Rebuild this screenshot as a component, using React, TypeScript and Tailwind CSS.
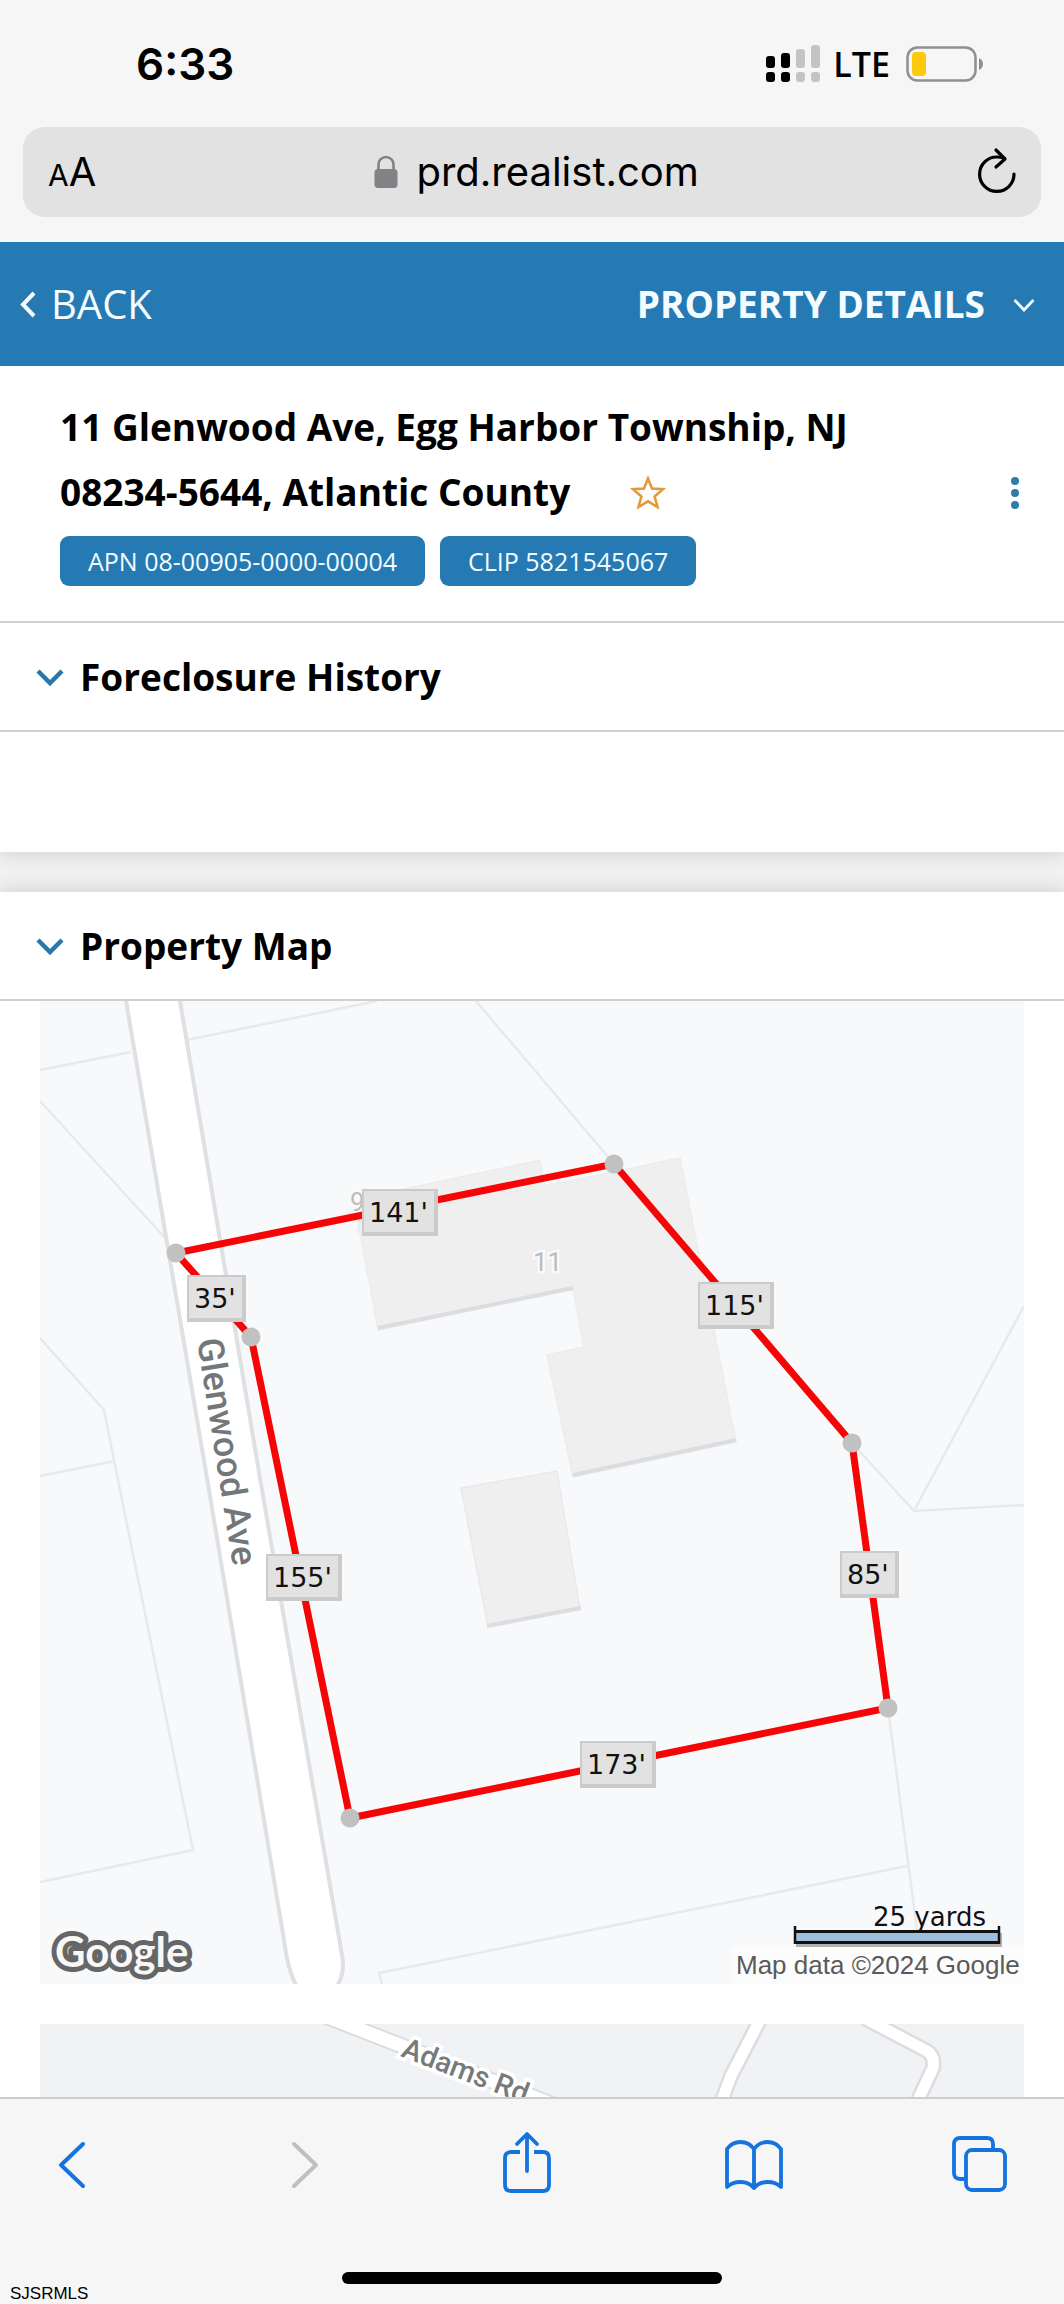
import React from "react";

const parcelLines = [
  "M40 1070L131 1052",
  "M187 1040L377 1001",
  "M476 1001L532 1067L614 1164",
  "M40 1101L166 1239",
  "M40 1338L104 1410L120 1490L193 1850L40 1882",
  "M40 1476L115 1461",
  "M1024 1306L914 1511L1024 1505",
  "M852 1443L914 1511",
  "M888 1708L924 1984",
  "M907 1866L379 1973L382 1984",
];

const corners = [
  [176, 1253],
  [251, 1337],
  [350, 1818],
  [888, 1708],
  [852, 1443],
  [614, 1164],
];

const sides = [
  { text: "141'", x: 362, y: 1189, w: 76 },
  { text: "35'", x: 187, y: 1275, w: 59 },
  { text: "115'", x: 698, y: 1282, w: 76 },
  { text: "155'", x: 266, y: 1554, w: 76 },
  { text: "85'", x: 840, y: 1551, w: 59 },
  { text: "173'", x: 580, y: 1741, w: 76 },
];

function StatusBar() {
  const tops = [11, 8, 4, 0];
  return (
    <div className="flex items-start justify-between pt-9 pr-20 pl-[136px] text-black">
      <time className="font-['Inter',sans-serif] text-[44px] leading-[56px] font-semibold">6:33</time>
      <div className="flex items-center pt-1">
        <svg className="h-[38px] w-[56px]" viewBox="0 0 56 38" role="img" aria-label="Signal strength">
          {tops.map((top, i) => (
            <g key={top} fill={i < 2 ? "#000" : "#c4c4c4"}>
              <rect x={i * 15 + 1} y={top} width="9" height={23 - top} rx="3" />
              <rect x={i * 15 + 1} y="27" width="9" height="10" rx="3" />
            </g>
          ))}
        </svg>
        <span className="ml-3 font-['Open_Sans',sans-serif] text-[34px] leading-[48px] font-semibold">LTE</span>
        <svg className="ml-4 h-[38px] w-[78px]" viewBox="0 0 78 38" role="img" aria-label="Battery low">
          <rect x="1.5" y="2.5" width="68" height="33" rx="10" fill="none" stroke="#8f8f8f" strokeWidth="2.5" />
          <rect x="6" y="7" width="14" height="24" rx="4" fill="#fcca0a" />
          <path d="M73 13Q77 15 77 19T73 25Z" fill="#8f8f8f" />
        </svg>
      </div>
    </div>
  );
}

function AddressBar() {
  return (
    <div className="mx-[23px] mt-[35px] mb-[25px] flex h-[90px] items-center justify-between rounded-[22px] bg-[#e2e2e2] pr-6 pl-[25px] font-['Inter',sans-serif] text-black">
      <button className="flex items-baseline leading-none" aria-label="Page settings">
        <span className="text-[30px]">A</span>
        <span className="text-[40px]">A</span>
      </button>
      <button className="flex items-center gap-[18px]">
        <svg className="h-[34px] w-6" viewBox="0 0 24 34" aria-hidden="true">
          <path d="M4.500 16V9.500a7.500 7.500 0 0 1 15 0V16" fill="none" stroke="#828286" strokeWidth="2.600" />
          <rect x="0.500" y="14" width="23" height="19" rx="3.500" fill="#828286" />
        </svg>
        <span className="text-[40px] leading-[50px]">prd.realist.com</span>
      </button>
      <button aria-label="Reload">
        <svg className="h-[50px] w-10" viewBox="0 0 40 50" fill="none" stroke="#000" strokeWidth="3.200" strokeLinecap="round" strokeLinejoin="round">
          <path d="M19 3L28 12L19 20" />
          <path d="M27 11.200Q23.500 10 20 10A17.200 17.200 0 1 0 37 27" />
        </svg>
      </button>
    </div>
  );
}

function SectionTitle({ children }: { children: string }) {
  return (
    <h2 className="border-b-2 border-[#d0d0d0] text-[37px] leading-[49px] font-bold text-black">
      <button className="flex w-full items-center gap-4 py-[29px] pl-9">
        <svg className="h-5 w-7" viewBox="0 0 28 20" fill="none" stroke="#2878ab" strokeWidth="4.500" aria-hidden="true">
          <path d="M2 4L14 16L26 4" />
        </svg>
        {children}
      </button>
    </h2>
  );
}

function ParcelMap() {
  return (
    <svg className="block w-full" viewBox="40 1001 984 983" role="img" aria-label="Parcel boundary map">
      <rect x="40" y="1001" width="984" height="983" fill="#f8f9fb" />
      <g fill="none" stroke="#e8e9ea" strokeWidth="2.500">
        {parcelLines.map((d) => (
          <path key={d} d={d} />
        ))}
      </g>
      <path
        d="M125 995L209 1490L284 1940Q288 1974 299 1990H334Q346 1976 342 1955L262 1490L179 995Z"
        fill="#fff"
        stroke="#dfe0e3"
        strokeWidth="4"
      />
      <path d="M361 1198L540 1160L546 1190L358 1232Z" fill="#efefef" stroke="#eaeaeb" />
      <path
        d="M358 1222L614 1172L680 1158L736 1442L573 1477L547 1355L584 1347L573 1289L378 1330Z"
        fill="#efefef"
        stroke="#ececed"
        strokeWidth="1.500"
      />
      <path d="M461 1488L557 1471L580 1609L488 1627Z" fill="#efefef" stroke="#e9e9ea" strokeWidth="1.500" />
      <g stroke="#dcdde0" strokeWidth="4">
        <path d="M378 1328L573 1288" />
        <path d="M573 1475L736 1440" />
        <path d="M487 1626L581 1608" />
      </g>
      <g fontFamily="Roboto, sans-serif" fontSize="26" fill="#bdbdbd" stroke="#fafafa" strokeWidth="5" paintOrder="stroke">
        <text x="533" y="1271">11</text>
        <text x="350" y="1211">9</text>
      </g>
      <text
        x="0"
        y="0"
        transform="translate(197 1340) rotate(81)"
        fontFamily="Roboto, sans-serif"
        fontSize="36"
        fontWeight="500"
        fill="#74777a"
      >
        Glenwood Ave
      </text>
      <polygon points={corners.map((p) => p.join(",")).join(" ")} fill="none" stroke="#f50505" strokeWidth="7" />
      {corners.map(([x, y]) => (
        <circle key={x} cx={x} cy={y} r="9.500" fill="#c1c1c1" />
      ))}
      {sides.map((s) => (
        <g key={s.text}>
          <rect x={s.x} y={s.y} width={s.w} height="47" fill="#cbcbcb" />
          <rect x={s.x + 2} y={s.y + 2} width={s.w - 6} height="41" fill="#e2e2e2" />
          <text x={s.x + 7} y={s.y + 33} fontFamily="'DejaVu Sans', sans-serif" fontSize="27" fill="#111">
            {s.text}
          </text>
        </g>
      ))}
      <text
        x="55"
        y="1967"
        fontFamily="Lato, sans-serif"
        fontSize="42"
        fontWeight="700"
        fill="#f8f8f8"
        stroke="#666"
        strokeWidth="10"
        strokeLinejoin="round"
        paintOrder="stroke"
      >
        Google
      </text>
      <rect x="732" y="1947" width="292" height="37" fill="#fcfcfc" />
      <rect x="796" y="1933" width="206" height="14" fill="#b5b1ae" />
      <rect x="795" y="1931" width="204" height="12" fill="#9dbfdc" />
      <path d="M795 1926V1944M999 1926V1944" stroke="#111" strokeWidth="2.500" />
      <path d="M794 1931.500H1000" stroke="#111" strokeWidth="3" />
      <path d="M794 1942.500H1000" stroke="#111" strokeWidth="3" />
      <text x="873" y="1926" fontFamily="'DejaVu Sans', sans-serif" fontSize="26" fill="#111">
        25 yards
      </text>
      <text x="736" y="1974" fontFamily="'Liberation Sans', sans-serif" fontSize="26" fill="#5a5a5a">
        Map data ©2024 Google
      </text>
    </svg>
  );
}

function AreaMap() {
  const roads = "M761 2018L731 2076L700 2160M864 2018L927 2051Q935 2056 933 2068L890 2160";
  return (
    <svg className="block w-full" viewBox="40 2024 984 983" role="img" aria-label="Area map">
      <rect x="40" y="2024" width="984" height="983" fill="#f1f2f4" />
      <g fill="none" strokeLinejoin="round">
        <path d="M320 2014L600 2123" stroke="#dcdde1" strokeWidth="17" />
        <path d="M320 2014L600 2123" stroke="#fff" strokeWidth="13" />
        <path d={roads} stroke="#dcdde1" strokeWidth="16" />
        <path d={roads} stroke="#fff" strokeWidth="11" />
      </g>
      <text
        x="0"
        y="0"
        transform="translate(400 2056) rotate(21)"
        fontFamily="Roboto, sans-serif"
        fontSize="29"
        fontWeight="500"
        fill="#777a7d"
        stroke="#fff"
        strokeWidth="7"
        paintOrder="stroke"
      >
        Adams Rd
      </text>
    </svg>
  );
}

function Toolbar() {
  const icon = "h-16 w-16";
  return (
    <nav aria-label="Browser" className="relative border-t-2 border-[#cdcdcd] bg-[#f6f6f6] pb-5">
      <div className="flex justify-between pt-8 pr-[52px] pb-[77px] pl-10 text-[#1473df]">
        <button aria-label="Back">
          <svg className={icon} viewBox="0 0 64 64" fill="none" stroke="currentColor" strokeWidth="4" strokeLinecap="round" strokeLinejoin="round">
            <path d="M43 13L21 34L43 55" />
          </svg>
        </button>
        <button aria-label="Forward" disabled className="text-[#bfbfbf]">
          <svg className={icon} viewBox="0 0 64 64" fill="none" stroke="currentColor" strokeWidth="4" strokeLinecap="round" strokeLinejoin="round">
            <path d="M27 13L49 34L27 55" />
          </svg>
        </button>
        <button aria-label="Share">
          <svg className={icon} viewBox="0 0 64 64" fill="none" stroke="currentColor" strokeWidth="3.800" strokeLinecap="round" strokeLinejoin="round">
            <path d="M33 40V4M23 13L33 3L43 13" />
            <path d="M26 21H17Q11 21 11 27V54Q11 60 17 60H49Q55 60 55 54V27Q55 21 49 21H40" strokeLinecap="butt" />
          </svg>
        </button>
        <button aria-label="Bookmarks">
          <svg className={icon} viewBox="0 0 64 64" fill="none" stroke="currentColor" strokeWidth="3.800" strokeLinecap="round" strokeLinejoin="round">
            <path d="M33 18Q28 11 19.500 11Q11 11 6 18V56Q11 51 19.500 51Q28 51 33 57Q38 51 46.500 51Q55 51 60 56V18Q55 11 46.500 11Q38 11 33 18V57" />
          </svg>
        </button>
        <button aria-label="Tabs">
          <svg className={icon} viewBox="0 0 64 64" fill="none" stroke="currentColor" strokeWidth="3.800">
            <path d="M17 48H12Q6 48 6 42V13Q6 7 12 7H39Q45 7 45 13V19" />
            <rect x="18" y="19" width="39" height="40" rx="6" />
          </svg>
        </button>
      </div>
      <div className="mx-auto h-3 w-[380px] max-w-full rounded-full bg-black" />
      <span className="absolute bottom-[2px] left-[10px] font-['Liberation_Sans',sans-serif] text-[17px] leading-none text-black">
        SJSRMLS
      </span>
    </nav>
  );
}

export default function App() {
  return (
    <div className="flex h-screen flex-col overflow-hidden bg-white font-['Open_Sans',sans-serif]">
      <div className="bg-[#f6f6f6]">
        <StatusBar />
        <AddressBar />
      </div>
      <header className="flex items-center justify-between bg-[#267ab3] py-[35px] pr-[29px] pl-5 text-[#f4fcff]">
        <a href="#back" className="flex items-center gap-[15px] text-[40px] leading-[54px] font-medium">
          <svg className="h-7 w-4" viewBox="0 0 16 28" fill="none" stroke="currentColor" strokeWidth="4" aria-hidden="true">
            <path d="M14 3L3 14.500L14 26" />
          </svg>
          BACK
        </a>
        <button className="flex items-center gap-7 text-[37px] leading-[54px] font-bold">
          PROPERTY DETAILS
          <svg className="h-4 w-[22px]" viewBox="0 0 22 16" fill="none" stroke="currentColor" strokeWidth="2.800" aria-hidden="true">
            <path d="M1.500 4L11 14L20.500 4" />
          </svg>
        </button>
      </header>
      <main className="min-h-0 flex-1 overflow-hidden bg-[#f1f1f1]">
        <section className="bg-white shadow-[0_0_20px_rgba(0,0,0,0.16)]">
          <div className="flex items-end justify-between border-b-2 border-[#d0d0d0] pt-7 pr-[45px] pb-[35px] pl-[60px]">
            <div>
              <h1 className="text-[37px] leading-[65px] font-bold text-black">
                11 Glenwood Ave, Egg Harbor Township, NJ
                <br />
                08234-5644, Atlantic County
                <button aria-label="Add to favorites" className="ml-[60px] inline-block pb-[6px] align-middle">
                  <svg className="block h-9 w-9" viewBox="0 0 36 36" fill="none" stroke="#e39a3c" strokeWidth="2.600">
                    <path d="M18 3.500L22 13.500L33 14.200L24.600 21.500L27.500 32L18 26.300L8.500 32L11.400 21.500L3 14.200L14 13.500Z" />
                  </svg>
                </button>
              </h1>
              <div className="mt-3 flex gap-[15px] text-[25px] leading-[50px] font-medium text-[#f4fcff]">
                <span className="rounded-[9px] bg-[#267ab3] px-7">APN 08-00905-0000-00004</span>
                <span className="rounded-[9px] bg-[#267ab3] px-7">CLIP 5821545067</span>
              </div>
            </div>
            <button aria-label="More options" className="mb-[75px]">
              <svg className="h-9 w-2" viewBox="0 0 8 36" fill="#2f7ca8">
                <circle cx="4" cy="6" r="4" />
                <circle cx="4" cy="18" r="4" />
                <circle cx="4" cy="30" r="4" />
              </svg>
            </button>
          </div>
          <SectionTitle>Foreclosure History</SectionTitle>
          <div className="h-[120px]" />
        </section>
        <section className="mt-10 bg-white shadow-[0_0_20px_rgba(0,0,0,0.16)]">
          <SectionTitle>Property Map</SectionTitle>
          <div className="flex flex-col gap-10 px-10">
            <ParcelMap />
            <AreaMap />
          </div>
        </section>
      </main>
      <Toolbar />
    </div>
  );
}
